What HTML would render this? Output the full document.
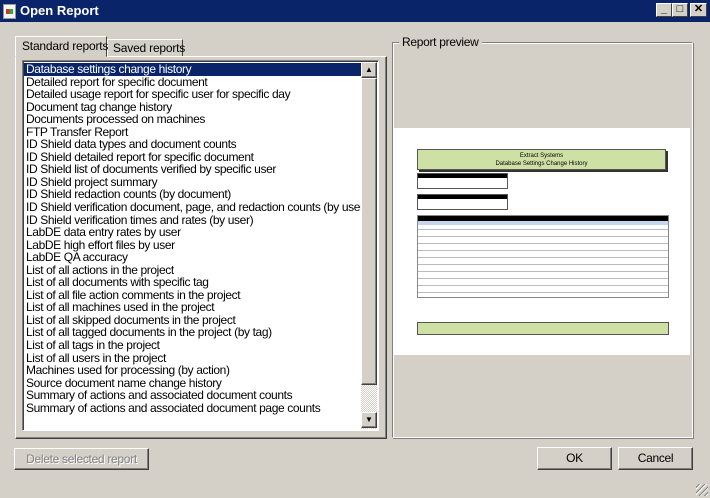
<!DOCTYPE html><html><head><style>
*{box-sizing:border-box;margin:0;padding:0}
body{width:710px;height:498px;background:#d4d0c8;font-family:"Liberation Sans",sans-serif;font-size:12px;position:relative;overflow:hidden;color:#000}
.abs{position:absolute;white-space:nowrap}
.title{left:0;top:0;width:710px;height:22px;background:#0a246a;color:#fff;font-weight:bold;font-size:13px;line-height:22px;padding-left:20px}
.wb{top:3px;width:16px;height:14px;background:#d4d0c8;border:1px solid;border-color:#fff #404040 #404040 #fff;font-size:11px;line-height:11px;text-align:center;color:#000;font-weight:bold}
.raised{border:1px solid;border-color:#fff #404040 #404040 #fff;box-shadow:inset -1px -1px #808080}
.sunk{border:1px solid;border-color:#808080 #fff #fff #808080;box-shadow:inset 1px 1px #404040}
.list div{height:12.55px;line-height:12.55px;padding-left:2px;white-space:nowrap;font-size:12px;letter-spacing:-0.38px}
.btn{text-align:center;line-height:20px;font-size:12px;letter-spacing:-0.3px}
.g{background:#cfe0a5;border:1px solid #555}
.bk{background:#000;color:#fff;font-size:3px}
</style></head><body>
<div class="abs title">Open Report</div>
<div class="abs" style="left:3px;top:4px;width:13px;height:15px;background:#f4f4f4;border:1px solid #999"><div style="margin:4px 2px;height:5px;background:linear-gradient(90deg,#c33 50%,#3a3 50%)"></div></div>
<div class="abs wb" style="left:656px">_</div>
<div class="abs wb" style="left:672px">□</div>
<div class="abs wb" style="left:690px;width:17px">✕</div>

<div class="abs" style="left:15px;top:36px;width:92px;height:21px;background:#d4d0c8;border:1px solid;border-color:#fff #404040 transparent #fff;z-index:2;line-height:18px;padding-left:6px;letter-spacing:-0.2px">Standard reports</div>
<div class="abs" style="left:107px;top:39px;width:76px;height:18px;border:1px solid;border-color:#fff #404040 transparent #fff;line-height:16px;padding-left:5px;letter-spacing:-0.2px">Saved reports</div>
<div class="abs raised" style="left:15px;top:56px;width:372px;height:383px"></div>
<div class="abs sunk list" style="left:22px;top:60px;width:357px;height:371px;background:#fff;padding:2px 0 0 1px;overflow:hidden">
<div style="background:#0a246a;color:#fff;width:338px">Database settings change history</div>
<div>Detailed report for specific document</div>
<div>Detailed usage report for specific user for specific day</div>
<div>Document tag change history</div>
<div>Documents processed on machines</div>
<div>FTP Transfer Report</div>
<div>ID Shield data types and document counts</div>
<div>ID Shield detailed report for specific document</div>
<div>ID Shield list of documents verified by specific user</div>
<div>ID Shield project summary</div>
<div>ID Shield redaction counts (by document)</div>
<div>ID Shield verification document, page, and redaction counts (by user)</div>
<div>ID Shield verification times and rates (by user)</div>
<div>LabDE data entry rates by user</div>
<div>LabDE high effort files by user</div>
<div>LabDE QA accuracy</div>
<div>List of all actions in the project</div>
<div>List of all documents with specific tag</div>
<div>List of all file action comments in the project</div>
<div>List of all machines used in the project</div>
<div>List of all skipped documents in the project</div>
<div>List of all tagged documents in the project (by tag)</div>
<div>List of all tags in the project</div>
<div>List of all users in the project</div>
<div>Machines used for processing (by action)</div>
<div>Source document name change history</div>
<div>Summary of actions and associated document counts</div>
<div>Summary of actions and associated document page counts</div>
</div>
<div class="abs" style="left:361px;top:62px;width:16px;height:367px;background:repeating-conic-gradient(#fff 0 25%,#d4d0c8 0 50%) 0 0/2px 2px"></div>
<div class="abs raised" style="left:361px;top:62px;width:16px;height:16px;background:#d4d0c8;font-size:8px;text-align:center;line-height:14px">▲</div>
<div class="abs raised" style="left:361px;top:78px;width:16px;height:307px;background:#d4d0c8"></div>
<div class="abs raised" style="left:361px;top:412px;width:16px;height:16px;background:#d4d0c8;font-size:8px;text-align:center;line-height:14px">▼</div>

<div class="abs" style="left:392px;top:42px;width:301px;height:396px;border:1px solid;border-color:#808080 #fff #fff #808080;box-shadow:inset 1px 1px #fff,1px 1px #808080"></div>
<div class="abs" style="left:399px;top:35px;background:#d4d0c8;padding:0 3px;line-height:14px;letter-spacing:-0.3px">Report preview</div>
<div class="abs" style="left:394px;top:128px;width:296px;height:227px;background:#fff">
<div class="abs g" style="left:23px;top:21px;width:249px;height:21px;box-shadow:2px 2px #333;font-size:6px;text-align:center;line-height:8px;padding-top:2px">Extract Systems<br>Database Settings Change History</div>
<div class="abs" style="left:23px;top:45px;width:91px;height:16px;border:1px solid #555"><div class="bk" style="height:4px"></div></div>
<div class="abs" style="left:23px;top:66px;width:91px;height:16px;border:1px solid #555"><div class="bk" style="height:4px"></div></div>
<div class="abs" style="left:23px;top:87px;width:252px;height:83px;border:1px solid #888;background:repeating-linear-gradient(#fff 0 6px,#bbb 6px 7px)"><div class="bk" style="height:5px"></div><div style="height:4px;background:#c6d6ee"></div></div>
<div class="abs g" style="left:23px;top:194px;width:252px;height:13px"></div>
</div>

<div class="abs raised btn" style="left:14px;top:448px;width:135px;height:22px;color:#808080;text-shadow:1px 1px #fff">Delete selected report</div>
<div class="abs raised btn" style="left:537px;top:447px;width:75px;height:23px">OK</div>
<div class="abs raised btn" style="left:618px;top:447px;width:75px;height:23px">Cancel</div>
<div class="abs" style="left:696px;top:484px;width:12px;height:12px;background:repeating-linear-gradient(135deg,transparent 0 2px,#808080 2px 3px,#fff 3px 4px)"></div>
</body></html>
